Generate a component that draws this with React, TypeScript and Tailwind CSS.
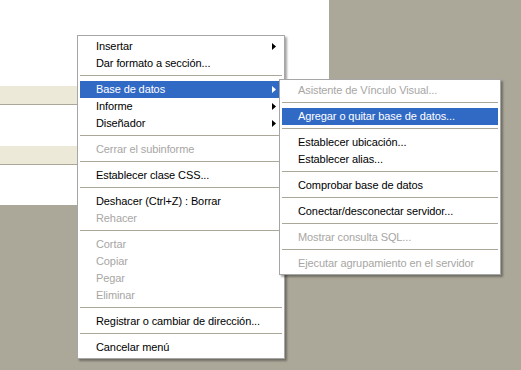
import React from "react";

type Entry =
  | { sep: true }
  | { label: string; disabled?: boolean; sub?: boolean; active?: boolean };

const mainItems: Entry[] = [
  { label: "Insertar", sub: true },
  { label: "Dar formato a sección..." },
  { sep: true },
  { label: "Base de datos", sub: true, active: true },
  { label: "Informe", sub: true },
  { label: "Diseñador", sub: true },
  { sep: true },
  { label: "Cerrar el subinforme", disabled: true },
  { sep: true },
  { label: "Establecer clase CSS..." },
  { sep: true },
  { label: "Deshacer (Ctrl+Z) : Borrar" },
  { label: "Rehacer", disabled: true },
  { sep: true },
  { label: "Cortar", disabled: true },
  { label: "Copiar", disabled: true },
  { label: "Pegar", disabled: true },
  { label: "Eliminar", disabled: true },
  { sep: true },
  { label: "Registrar o cambiar de dirección..." },
  { sep: true },
  { label: "Cancelar menú" },
];

const subItems: Entry[] = [
  { label: "Asistente de Vínculo Visual...", disabled: true },
  { sep: true },
  { label: "Agregar o quitar base de datos...", active: true },
  { sep: true },
  { label: "Establecer ubicación..." },
  { label: "Establecer alias..." },
  { sep: true },
  { label: "Comprobar base de datos" },
  { sep: true },
  { label: "Conectar/desconectar servidor..." },
  { sep: true },
  { label: "Mostrar consulta SQL...", disabled: true },
  { sep: true },
  { label: "Ejecutar agrupamiento en el servidor", disabled: true },
];

function Arrow({ white }: { white?: boolean }) {
  return (
    <svg width="4" height="7" viewBox="0 0 4 7" className="block">
      <path d="M0 0 L4 3.5 L0 7 Z" fill={white ? "#ffffff" : "#000000"} />
    </svg>
  );
}

function Menu({ items }: { items: Entry[] }) {
  return (
    <div className="flex flex-col">
      {items.map((it, i) =>
        "sep" in it ? (
          <div key={i} className="h-[9px] pt-[3px]">
            <div className="h-px bg-[#aca899]" />
          </div>
        ) : (
          <div
            key={i}
            className={
              "h-[17px] flex items-center pl-[16px] pr-[6px] " +
              (it.active ? "bg-[#316ac5] text-white" : it.disabled ? "text-[#a7a6a4]" : "text-black")
            }
          >
            <span className="flex-1 whitespace-nowrap leading-none pb-px tracking-[-0.1px]">{it.label}</span>
            {it.sub && <Arrow white={it.active} />}
          </div>
        )
      )}
    </div>
  );
}

export default function App() {
  return (
    <div
      className="relative w-[521px] h-[370px] overflow-hidden bg-[#aca899] text-[11px]"
      style={{ fontFamily: "Tahoma, 'Liberation Sans', Arial, sans-serif" }}
    >
      <div className="w-[329px] h-[205px] bg-white flex flex-col">
        <div className="h-[86px]" />
        <div className="h-[18px] bg-[#ece9d8] border-b border-[#aca899] box-content" />
        <div className="h-[41px]" />
        <div className="h-[18px] bg-[#ece9d8] border-b border-[#aca899] box-content" />
      </div>

      <div className="absolute left-[77px] top-[35px] w-[208px] h-[324px] bg-white border border-[#a6a6a6] p-[2px] shadow-[2px_2px_2px_rgba(0,0,0,0.35)]">
        <Menu items={mainItems} />
      </div>

      <div className="absolute left-[279px] top-[79px] w-[222px] h-[196px] bg-white border border-[#a6a6a6] p-[2px] shadow-[2px_2px_2px_rgba(0,0,0,0.35)]">
        <Menu items={subItems} />
      </div>
    </div>
  );
}
